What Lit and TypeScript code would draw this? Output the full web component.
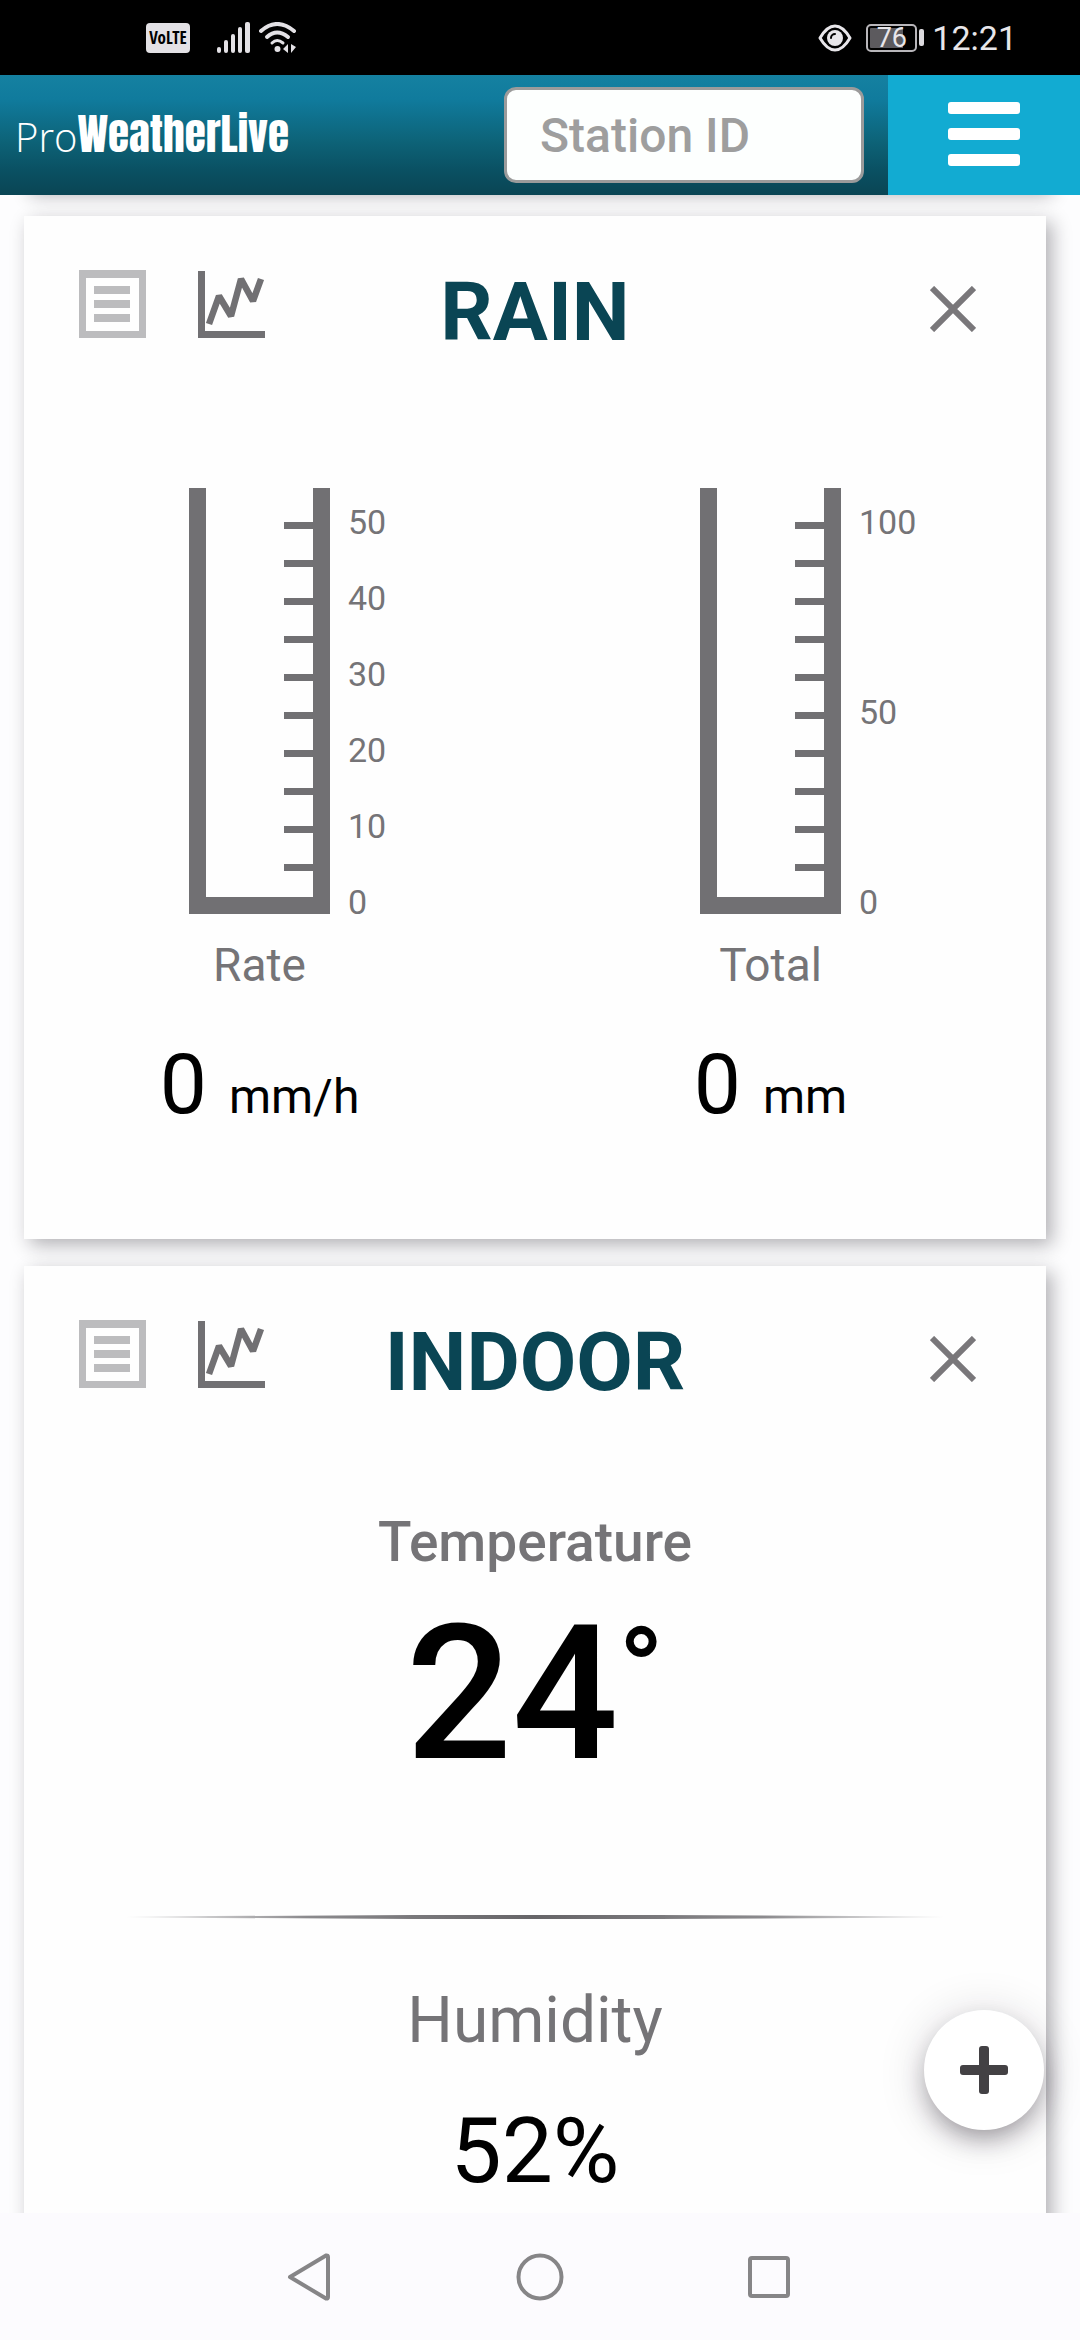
import { LitElement, html, css, svg } from "lit";
import { customElement, property } from "lit/decorators.js";

@customElement("status-bar")
export class StatusBar extends LitElement {
  static styles = css`
    :host {
      display: flex;
      align-items: center;
      justify-content: space-between;
      flex: none;
      height: 75px;
      padding: 0 63px 0 146px;
      background: #000;
      color: #e8e6ea;
      font-family: Roboto, sans-serif;
    }
    .group {
      display: flex;
      align-items: center;
    }
    .volte {
      display: flex;
      align-items: center;
      justify-content: center;
      width: 44px;
      height: 30px;
      margin-right: 27px;
      border-radius: 4px;
      background: #e3e1e5;
      color: #000;
      font: 800 17px/30px "Open Sans Condensed", "Roboto Condensed", "Open Sans", sans-serif;
    }
    .signal {
      margin-right: 9px;
    }
    .eye {
      margin-right: 14px;
    }
    .battery {
      display: flex;
      align-items: center;
      gap: 2px;
      margin-right: 8px;
    }
    .cell {
      display: flex;
      align-items: center;
      justify-content: center;
      box-sizing: border-box;
      width: 51px;
      height: 28px;
      border: 2px solid #b8b6ba;
      border-radius: 5px;
      font-size: 27px;
      line-height: 24px;
      background: linear-gradient(90deg, #5c5a5e 76%, transparent 76%) content-box;
      padding: 2px;
    }
    .nub {
      width: 5px;
      height: 17px;
      border-radius: 2px;
      background: #dcdade;
    }
    .time {
      font-size: 34px;
      line-height: 40px;
    }
    svg {
      display: block;
    }
  `;

  render() {
    return html`
      <div class="group">
        <span class="volte">VoLTE</span>
        <svg class="signal" width="33" height="32" viewBox="0 0 33 32" fill="#e3e1e5" aria-hidden="true">
          <rect x="0" y="25" width="4" height="6" rx="2" />
          <rect x="7" y="18" width="4" height="13" rx="2" />
          <rect x="14" y="12" width="4" height="19" rx="2" />
          <rect x="21" y="5" width="4" height="26" rx="2" />
          <rect x="28" y="0" width="5" height="31" rx="2" />
        </svg>
        <svg width="38" height="32" viewBox="0 0 38 32" fill="none" stroke="#e3e1e5" stroke-width="4" stroke-linecap="round" aria-hidden="true">
          <path d="M2 9Q18 -5 35 9" />
          <path d="M8 15Q18 6 29 15" />
          <path d="M13 21Q18 16 24 21" stroke-width="3" />
          <circle cx="18.500" cy="27" r="3" fill="#e3e1e5" stroke="none" />
          <path d="M29 22V31L24 27ZM32 31V22L37 25Z" fill="#e3e1e5" stroke="none" />
        </svg>
      </div>
      <div class="group">
        <svg class="eye" width="34" height="28" viewBox="0 0 34 28" fill="none" aria-hidden="true">
          <path d="M2 14Q9 2 17 2T32 14Q25 26 17 26T2 14Z" stroke="#e8e6ea" stroke-width="3" stroke-linejoin="round" />
          <circle cx="17" cy="14" r="8" fill="#e8e6ea" />
          <path d="M13 14A4 4 0 0 1 17 10" stroke="#000" stroke-width="2" stroke-linecap="round" />
        </svg>
        <span class="battery"><span class="cell">76</span><span class="nub"></span></span>
        <time class="time">12:21</time>
      </div>
    `;
  }
}

@customElement("app-header")
export class AppHeader extends LitElement {
  static styles = css`
    :host {
      display: flex;
      align-items: center;
      flex: none;
      height: 120px;
      position: relative;
      background: linear-gradient(#1581a1, #107b9d 20%, #0d6378 55%, #0a5062 80%, #0a4554);
      font-family: Roboto, sans-serif;
    }
    .logo {
      display: flex;
      align-items: baseline;
      flex: 1;
      padding-left: 15px;
      color: #fff;
      text-decoration: none;
      line-height: 60px;
    }
    .thin {
      font-family: "Open Sans", sans-serif;
      font-weight: 300;
      font-size: 40px;
    }
    .heavy {
      font-family: Impact, Anton, "Open Sans Condensed", "Roboto Condensed", sans-serif;
      font-weight: 400;
      font-size: 43px;
    }
    .station {
      box-sizing: border-box;
      width: 33.33%;
      height: 96px;
      margin-right: 24px;
      padding: 0 33px;
      border: 3px solid #9b9b9b;
      border-radius: 12px;
      background: #fdfffe;
      color: #555;
      font: 500 48px/60px Roboto, sans-serif;
      outline: none;
    }
    .station::placeholder {
      color: #9e9e9e;
      opacity: 1;
    }
    .menu {
      display: flex;
      flex-direction: column;
      align-items: center;
      justify-content: center;
      gap: 14px;
      width: 192px;
      height: 120px;
      padding: 0 0 2px;
      border: 0;
      background: #12abd2;
    }
    .bar {
      width: 72px;
      height: 12px;
      border-radius: 3px;
      background: #fff;
    }
  `;

  render() {
    return html`
      <a class="logo" href="#"><span class="thin">Pro</span><span class="heavy">WeatherLive</span></a>
      <input class="station" type="text" placeholder="Station ID" aria-label="Station ID" />
      <button class="menu" type="button" aria-label="Menu">
        <span class="bar"></span><span class="bar"></span><span class="bar"></span>
      </button>
    `;
  }
}

@customElement("weather-card")
export class WeatherCard extends LitElement {
  @property() heading = "";

  static styles = css`
    :host {
      display: block;
      box-sizing: border-box;
      min-height: 1023px;
      padding-top: 54px;
      background: #fefefe;
      box-shadow: 6px 6px 18px rgba(20, 15, 25, 0.32);
    }
    .head {
      display: grid;
      grid-template-columns: 1fr auto 1fr;
      align-items: start;
      height: 84px;
      padding: 0 55px;
    }
    .views {
      display: flex;
      gap: 52px;
    }
    .title {
      margin: 0;
      color: #0a4554;
      font-weight: 700;
      font-size: 82px;
      line-height: 84px;
    }
    button {
      display: block;
      padding: 0;
      border: 0;
      background: none;
    }
    .close {
      justify-self: end;
      width: 60px;
      height: 78px;
      margin-right: 8px;
    }
    svg {
      display: block;
      margin: auto;
    }
  `;

  render() {
    return html`
      <header class="head">
        <div class="views">
          <button type="button" aria-label="List view">
            <svg width="67" height="68" viewBox="0 0 67 68" fill="#bcbcbe">
              <path d="M0 0H67V68H0ZM7 8V61H60V8Z" fill-rule="evenodd" />
              <path d="M15 16H51V24H15ZM15 30H51V38H15ZM15 44H51V52H15Z" />
            </svg>
          </button>
          <button type="button" aria-label="Chart view">
            <svg width="67" height="68" viewBox="0 0 67 68" fill="none" stroke="#717073">
              <path d="M3.500 1V64.500H67" stroke-width="7" />
              <path d="M11 54L21 26L33 46L43 9L55 31L63 9" stroke-width="6.500" stroke-linejoin="bevel" />
            </svg>
          </button>
        </div>
        <h2 class="title">${this.heading}</h2>
        <button class="close" type="button" aria-label="Close">
          <svg width="46" height="46" viewBox="0 0 46 46" stroke="#79777a" stroke-width="6">
            <path d="M2 2L44 44M44 2L2 44" />
          </svg>
        </button>
      </header>
      <slot></slot>
    `;
  }
}

@customElement("rain-gauge")
export class RainGauge extends LitElement {
  @property() label = "";
  @property() value = "";
  @property() unit = "";
  @property({ attribute: false }) marks: number[] = [];

  static styles = css`
    :host {
      display: flex;
      flex-direction: column;
      align-items: center;
      padding-right: 40px;
    }
    .gauge {
      display: grid;
      grid-template-columns: 1fr auto 1fr;
      align-items: start;
      align-self: stretch;
    }
    .tube {
      display: block;
      grid-column: 2;
    }
    .marks {
      display: flex;
      flex-direction: column;
      justify-content: space-between;
      height: 420px;
      margin: 14px 0 0 18px;
      padding: 0;
      list-style: none;
      color: #757477;
      font-size: 34px;
      line-height: 40px;
    }
    .label {
      margin-top: 16px;
      color: #757477;
      font-size: 46px;
      line-height: 54px;
    }
    .reading {
      display: flex;
      align-items: baseline;
      gap: 22px;
      margin-top: 45px;
      color: #000;
      line-height: 96px;
    }
    .value {
      font-size: 84px;
    }
    .unit {
      font-size: 48px;
    }
  `;

  render() {
    const ticks = Array.from({ length: 10 }, (_, i) => 34 + i * 38);
    return html`
      <div class="gauge">
        <svg class="tube" width="141" height="426" viewBox="0 0 141 426" fill="#717073" aria-hidden="true">
          <path d="M0 0H17V409H124V0H141V426H0Z" />
          ${ticks.map((y) => svg`<rect x="95" y=${y} width="30" height="7" />`)}
        </svg>
        <ul class="marks">
          ${this.marks.map((m) => html`<li>${m}</li>`)}
        </ul>
      </div>
      <div class="label">${this.label}</div>
      <div class="reading"><span class="value">${this.value}</span><span class="unit">${this.unit}</span></div>
    `;
  }
}

@customElement("nav-bar")
export class NavBar extends LitElement {
  static styles = css`
    :host {
      display: flex;
      align-items: center;
      justify-content: center;
      gap: 170px;
      flex: none;
      height: 127px;
      background: #fcfbfe;
    }
    button {
      padding: 0;
      border: 0;
      background: none;
    }
    svg {
      display: block;
    }
  `;

  render() {
    return html`
      <button type="button" aria-label="Back">
        <svg width="60" height="60" viewBox="0 0 60 60" fill="none" stroke="#868587" stroke-width="4" stroke-linejoin="round">
          <path d="M10 30L46 8.500Q48 8 48 10V50Q48 52 46 51.500Z" />
        </svg>
      </button>
      <button type="button" aria-label="Home">
        <svg width="60" height="60" viewBox="0 0 60 60" fill="none" stroke="#868587" stroke-width="4">
          <circle cx="30" cy="30" r="21.500" />
        </svg>
      </button>
      <button type="button" aria-label="Recent apps">
        <svg width="60" height="60" viewBox="0 0 60 60" fill="none" stroke="#868587" stroke-width="4">
          <rect x="10" y="11" width="38" height="38" rx="2" />
        </svg>
      </button>
    `;
  }
}

@customElement("app-root")
export class AppRoot extends LitElement {
  static styles = css`
    :host {
      display: flex;
      flex-direction: column;
      height: 100vh;
      background: #fdfdfe;
      font-family: Roboto, sans-serif;
    }
    .page {
      position: relative;
      flex: 1;
      min-height: 0;
      display: flex;
    }
    .feed {
      flex: 1;
      display: flex;
      flex-direction: column;
      gap: 27px;
      padding: 0 34px 0 24px;
      overflow: hidden auto;
      scrollbar-width: none;
    }
    .feed > * {
      flex: none;
    }
    .scrolled {
      height: 40px;
      margin-top: -46px;
      background: #fefefe;
      box-shadow: 6px 6px 18px rgba(20, 15, 25, 0.32);
    }
    .gauges {
      display: grid;
      grid-template-columns: 1fr 1fr;
      margin-top: 134px;
    }
    .indoor {
      display: flex;
      flex-direction: column;
      align-items: center;
      color: #000;
    }
    .name {
      margin-top: 106px;
      color: #757477;
      font-weight: 500;
      font-size: 55px;
      line-height: 64px;
    }
    .temp {
      display: flex;
      align-items: flex-start;
      margin-top: 28px;
      font-weight: 500;
      font-size: 187px;
      line-height: 186px;
    }
    .degree {
      font-size: 120px;
      line-height: 140px;
    }
    .rule {
      width: 80%;
      height: 4px;
      margin: 127px 0 0;
      border: 0;
      background: linear-gradient(90deg, transparent, #8b8a8d 22%, #666568 50%, #8b8a8d 78%, transparent);
      clip-path: polygon(0 40%, 35% 0, 65% 0, 100% 40%, 100% 60%, 65% 100%, 35% 100%, 0 60%);
    }
    .subname {
      margin-top: 64px;
      color: #757477;
      font-size: 64px;
      line-height: 76px;
    }
    .humidity {
      margin-top: 42px;
      font-size: 91px;
      line-height: 100px;
    }
    .add {
      position: absolute;
      right: 36px;
      bottom: 83px;
      display: grid;
      place-items: center;
      width: 120px;
      height: 120px;
      padding: 0;
      border: 0;
      border-radius: 50%;
      background: #fff;
      box-shadow: 0 12px 24px -4px rgba(30, 20, 35, 0.38), 0 4px 48px rgba(30, 20, 35, 0.16);
    }
  `;

  render() {
    return html`
      <status-bar></status-bar>
      <app-header></app-header>
      <main class="page">
        <div class="feed">
          <div class="scrolled"></div>
          <weather-card heading="RAIN">
            <div class="gauges">
              <rain-gauge label="Rate" value="0" unit="mm/h" .marks=${[50, 40, 30, 20, 10, 0]}></rain-gauge>
              <rain-gauge label="Total" value="0" unit="mm" .marks=${[100, 50, 0]}></rain-gauge>
            </div>
          </weather-card>
          <weather-card heading="INDOOR">
            <div class="indoor">
              <div class="name">Temperature</div>
              <div class="temp"><span>24</span><span class="degree">°</span></div>
              <hr class="rule" />
              <div class="subname">Humidity</div>
              <div class="humidity">52%</div>
            </div>
          </weather-card>
        </div>
        <button class="add" type="button" aria-label="Add">
          <svg width="48" height="48" viewBox="0 0 48 48" fill="#434144">
            <rect x="19" y="0" width="10" height="48" rx="3" />
            <rect x="0" y="19" width="48" height="10" rx="3" />
          </svg>
        </button>
      </main>
      <nav-bar></nav-bar>
    `;
  }
}
